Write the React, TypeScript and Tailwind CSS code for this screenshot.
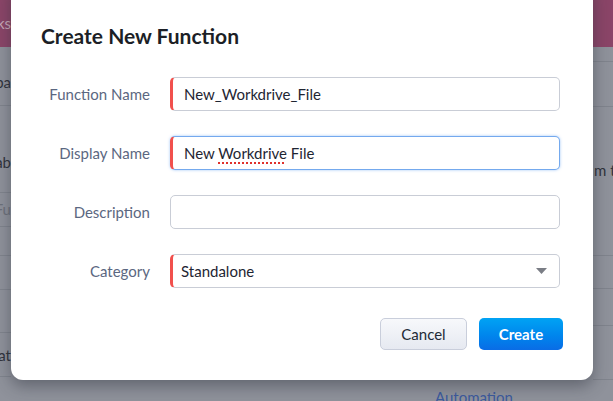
import React from 'react';

const font = { fontFamily: 'Lato, "Open Sans", Arial, sans-serif' };

const leftRows = [
  { h: 47, text: 'ks', cls: 'bg-[#8b4568] text-[#c9a9b9]', line: false },
  { h: 59, text: 'pa', cls: 'items-end pb-[12px] text-[#2f333b]', line: true },
  { h: 87, text: 'ab', cls: 'items-end pb-[19px] text-[#2f333b]', line: true },
  { h: 34, text: 'Fu', cls: 'text-[#6d717a]', line: true },
  { h: 29, text: '', cls: '', line: true },
  { h: 34, text: '', cls: '', line: true },
  { h: 43, text: '', cls: '', line: true },
  { h: 44, text: 'at', cls: 'items-center pt-[2px] text-[#2f333b]', line: true },
  { h: 24, text: '', cls: '', line: false },
];

const rightRows = [
  { h: 47, text: '', cls: 'bg-[#8b4568]', line: false },
  { h: 15, text: '', cls: '', line: true },
  { h: 45, text: '', cls: '', line: true },
  { h: 149, text: 'm t', cls: 'items-start pt-[52px] text-[#2f333b]', line: true },
  { h: 33, text: '', cls: '', line: true },
  { h: 37, text: '', cls: '', line: true },
  { h: 54, text: '', cls: '', line: true },
  { h: 21, text: '', cls: '', line: false },
];

function Field({ label, value, required, focused, select, squiggle }: { label: string; value?: string; required?: boolean; focused?: boolean; select?: boolean; squiggle?: boolean }) {
  return (
    <div className="flex items-center">
      <label className="w-[108px] shrink-0 text-right text-[15px] text-[#5b6781]">{label}</label>
      <div
        className={`ml-[20px] flex h-[34px] w-[390px] items-center rounded-[5px] border bg-white text-[15px] text-[#1e2532] ${
          focused ? 'border-[#74a9ee] shadow-[0_0_3px_rgba(80,150,240,0.55)]' : 'border-[#c9cdd6]'
        } ${required ? 'border-l-[3px] border-l-[#f1504d]' : ''} ${select ? 'pl-[8px] pr-[12px]' : 'px-[11px]'}`}
      >
        <span className="flex-1 truncate">
          {squiggle ? (
            <>
              New{' '}
              <span className="underline decoration-dotted decoration-[#e0302b] decoration-[1.5px] underline-offset-[4px]">Workdrive</span>{' '}
              File
            </>
          ) : (
            value
          )}
        </span>
        {select && (
          <svg width="11" height="6" viewBox="0 0 11 6">
            <path d="M0 0 L11 0 L5.5 6 Z" fill="#7a7d85" />
          </svg>
        )}
      </div>
    </div>
  );
}

export default function App() {
  return (
    <div className="relative h-[401px] w-[613px] overflow-hidden bg-[#8f929b]" style={font}>
      {/* page behind the dimmed overlay */}
      <div className="flex h-full">
        <div className="flex w-[11px] flex-col overflow-hidden">
          {leftRows.map((r, i) => (
            <div
              key={i}
              style={{ height: r.h }}
              className={`flex shrink-0 items-center justify-end whitespace-nowrap text-[15px] ${r.cls} ${r.line ? 'border-b border-[#80848d]' : ''}`}
            >
              {r.text}
            </div>
          ))}
        </div>
        <div className="w-[582px]" />
        <div className="flex w-[20px] flex-col overflow-hidden">
          {rightRows.map((r, i) => (
            <div
              key={i}
              style={{ height: r.h }}
              className={`flex shrink-0 whitespace-nowrap pl-[1px] text-[15px] ${r.cls} ${r.line ? 'border-b border-[#80848d]' : ''}`}
            >
              {r.text}
            </div>
          ))}
        </div>
      </div>
      <div className="absolute left-[435px] top-[386px] text-[15px] text-[#3c5a9e]">Automation</div>

      {/* modal */}
      <div className="absolute left-[11px] top-[-20px] h-[400px] w-[582px] rounded-[12px] bg-white shadow-[0_6px_16px_rgba(40,44,56,0.45)]">
        <h2 className="pl-[30px] pt-[42px] text-[21px] font-bold leading-[28px] text-[#1c1f26]">Create New Function</h2>
        <div className="mt-[27px] flex flex-col gap-[25px] pl-[31px]">
          <Field label="Function Name" value="New_Workdrive_File" required />
          <Field label="Display Name" required focused squiggle />
          <Field label="Description" value="" />
          <Field label="Category" value="Standalone" required select />
        </div>
        <div className="mt-[30px] flex justify-end gap-[12px] pr-[30px]">
          <button className="h-[32px] w-[87px] rounded-[5px] border border-[#c9cedb] bg-gradient-to-b from-[#f7f8fb] to-[#e6e9f1] text-[15px] text-[#222a36]">
            Cancel
          </button>
          <button className="h-[32px] w-[84px] rounded-[5px] bg-gradient-to-b from-[#01a3f4] to-[#0a6ce6] text-[15px] font-bold text-white">
            Create
          </button>
        </div>
      </div>
    </div>
  );
}
